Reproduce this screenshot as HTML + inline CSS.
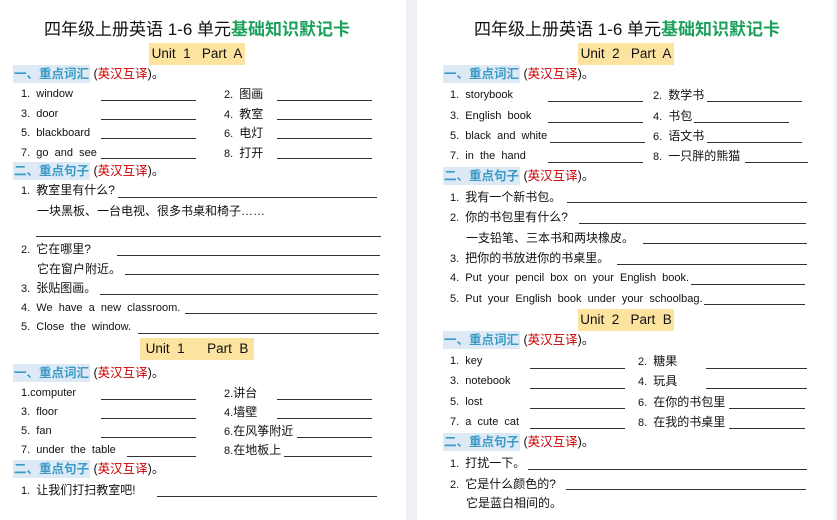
<!DOCTYPE html>
<html><head><meta charset="utf-8"><style>
body{margin:0;width:837px;height:504px;overflow:hidden;background:#eef0f4;position:relative;font-family:"Liberation Sans","Noto Sans CJK SC",sans-serif;color:#111}
.pg{position:absolute;top:0;height:520px;background:#fff}
.t{position:absolute;font-size:11px;line-height:14px;white-space:pre}
.t.c{font-size:12px}
.t i{font-style:normal;font-size:12px}
.l{position:absolute;height:1px;background:#333}
.ti{position:absolute;font-size:17px;font-weight:normal;line-height:20px;white-space:pre;transform:translateX(-50%)}
.ti b{color:#1aa05a}
.u{position:absolute;background:#fde3a0;font-size:13.5px;line-height:22px;height:22px;text-align:center;white-space:pre}
.s{position:absolute;font-size:12.5px;line-height:19px;white-space:pre}
.s span.h{background:#dde9f5;color:#3a9bc8;font-weight:bold;padding:2px 1px}
.s span.r{color:#c00}
</style></head><body>
<div class="pg" style="left:0;width:406px"></div>
<div class="pg" style="left:417px;width:417px"></div>

<!-- LEFT -->
<div class="ti" style="left:197px;top:20px">四年级上册英语 1-6 单元<b>基础知识默记卡</b></div>
<div class="u" style="left:149px;top:43px;width:96px">Unit  1   Part  A</div>
<div class="s" style="left:13px;top:65px"><span class="h">一、重点词汇</span> (<span class="r">英汉互译</span>)。</div>
<div class="t" style="left:21px;top:87px">1.  window</div><div class="l" style="left:101px;top:100px;width:95px"></div>
<div class="t" style="left:224px;top:87px">2.  <i>图画</i></div><div class="l" style="left:277px;top:100px;width:95px"></div>
<div class="t" style="left:21px;top:107px">3.  door</div><div class="l" style="left:101px;top:119px;width:95px"></div>
<div class="t" style="left:224px;top:107px">4.  <i>教室</i></div><div class="l" style="left:277px;top:119px;width:95px"></div>
<div class="t" style="left:21px;top:126px">5.  blackboard</div><div class="l" style="left:101px;top:138px;width:95px"></div>
<div class="t" style="left:224px;top:126px">6.  <i>电灯</i></div><div class="l" style="left:277px;top:138px;width:95px"></div>
<div class="t" style="left:21px;top:146px">7.  go  and  see</div><div class="l" style="left:101px;top:158px;width:95px"></div>
<div class="t" style="left:224px;top:146px">8.  <i>打开</i></div><div class="l" style="left:277px;top:158px;width:95px"></div>
<div class="s" style="left:13px;top:162px"><span class="h">二、重点句子</span> (<span class="r">英汉互译</span>)。</div>
<div class="t" style="left:21px;top:183px">1.  <i>教室里有什么?</i></div><div class="l" style="left:118px;top:197px;width:259px"></div>
<div class="t c" style="left:37px;top:204px">一块黑板、一台电视、很多书桌和椅子……</div>
<div class="l" style="left:36px;top:236px;width:345px"></div>
<div class="t" style="left:21px;top:242px">2.  <i>它在哪里?</i></div><div class="l" style="left:117px;top:255px;width:263px"></div>
<div class="t c" style="left:37px;top:262px">它在窗户附近。</div><div class="l" style="left:125px;top:274px;width:254px"></div>
<div class="t" style="left:21px;top:281px">3.  <i>张贴图画。</i></div><div class="l" style="left:100px;top:294px;width:278px"></div>
<div class="t" style="left:21px;top:301px">4.  We  have  a  new  classroom.</div><div class="l" style="left:185px;top:313px;width:192px"></div>
<div class="t" style="left:21px;top:320px">5.  Close  the  window.</div><div class="l" style="left:138px;top:333px;width:241px"></div>
<div class="u" style="left:140px;top:338px;width:114px">Unit  1      Part  B</div>
<div class="s" style="left:13px;top:364px"><span class="h">一、重点词汇</span> (<span class="r">英汉互译</span>)。</div>
<div class="t" style="left:21px;top:386px">1.computer</div><div class="l" style="left:101px;top:399px;width:95px"></div>
<div class="t" style="left:224px;top:386px">2.<i>讲台</i></div><div class="l" style="left:277px;top:399px;width:95px"></div>
<div class="t" style="left:21px;top:405px">3.  floor</div><div class="l" style="left:101px;top:418px;width:95px"></div>
<div class="t" style="left:224px;top:405px">4.<i>墙壁</i></div><div class="l" style="left:277px;top:418px;width:95px"></div>
<div class="t" style="left:21px;top:424px">5.  fan</div><div class="l" style="left:101px;top:437px;width:95px"></div>
<div class="t" style="left:224px;top:424px">6.<i>在风筝附近</i></div><div class="l" style="left:297px;top:437px;width:75px"></div>
<div class="t" style="left:21px;top:443px">7.  under  the  table</div><div class="l" style="left:127px;top:456px;width:69px"></div>
<div class="t" style="left:224px;top:443px">8.<i>在地板上</i></div><div class="l" style="left:284px;top:456px;width:88px"></div>
<div class="s" style="left:13px;top:460px"><span class="h">二、重点句子</span> (<span class="r">英汉互译</span>)。</div>
<div class="t" style="left:21px;top:483px">1.  <i>让我们打扫教室吧!</i></div><div class="l" style="left:157px;top:496px;width:220px"></div>

<!-- RIGHT -->
<div class="ti" style="left:627px;top:20px">四年级上册英语 1-6 单元<b>基础知识默记卡</b></div>
<div class="u" style="left:578px;top:43px;width:96px">Unit  2   Part  A</div>
<div class="s" style="left:443px;top:65px"><span class="h">一、重点词汇</span> (<span class="r">英汉互译</span>)。</div>
<div class="t" style="left:450px;top:88px">1.  storybook</div><div class="l" style="left:548px;top:101px;width:95px"></div>
<div class="t" style="left:653px;top:88px">2.  <i>数学书</i></div><div class="l" style="left:707px;top:101px;width:95px"></div>
<div class="t" style="left:450px;top:109px">3.  English  book</div><div class="l" style="left:548px;top:122px;width:95px"></div>
<div class="t" style="left:653px;top:109px">4.  <i>书包</i></div><div class="l" style="left:694px;top:122px;width:95px"></div>
<div class="t" style="left:450px;top:129px">5.  black  and  white</div><div class="l" style="left:550px;top:142px;width:95px"></div>
<div class="t" style="left:653px;top:129px">6.  <i>语文书</i></div><div class="l" style="left:707px;top:142px;width:95px"></div>
<div class="t" style="left:450px;top:149px">7.  in  the  hand</div><div class="l" style="left:548px;top:162px;width:95px"></div>
<div class="t" style="left:653px;top:149px">8.  <i>一只胖的熊猫</i></div><div class="l" style="left:745px;top:162px;width:63px"></div>
<div class="s" style="left:443px;top:167px"><span class="h">二、重点句子</span> (<span class="r">英汉互译</span>)。</div>
<div class="t" style="left:450px;top:190px">1.  <i>我有一个新书包。</i></div><div class="l" style="left:567px;top:202px;width:240px"></div>
<div class="t" style="left:450px;top:210px">2.  <i>你的书包里有什么?</i></div><div class="l" style="left:579px;top:223px;width:227px"></div>
<div class="t c" style="left:466px;top:231px">一支铅笔、三本书和两块橡皮。</div><div class="l" style="left:643px;top:243px;width:164px"></div>
<div class="t" style="left:450px;top:251px">3.  <i>把你的书放进你的书桌里。</i></div><div class="l" style="left:617px;top:264px;width:190px"></div>
<div class="t" style="left:450px;top:271px">4.  Put  your  pencil  box  on  your  English  book.</div><div class="l" style="left:691px;top:284px;width:114px"></div>
<div class="t" style="left:450px;top:292px">5.  Put  your  English  book  under  your  schoolbag.</div><div class="l" style="left:704px;top:304px;width:101px"></div>
<div class="u" style="left:578px;top:309px;width:96px">Unit  2   Part  B</div>
<div class="s" style="left:443px;top:331px"><span class="h">一、重点词汇</span> (<span class="r">英汉互译</span>)。</div>
<div class="t" style="left:450px;top:354px">1.  key</div><div class="l" style="left:530px;top:368px;width:95px"></div>
<div class="t" style="left:638px;top:354px">2.  <i>糖果</i></div><div class="l" style="left:706px;top:368px;width:101px"></div>
<div class="t" style="left:450px;top:374px">3.  notebook</div><div class="l" style="left:530px;top:388px;width:95px"></div>
<div class="t" style="left:638px;top:374px">4.  <i>玩具</i></div><div class="l" style="left:706px;top:388px;width:101px"></div>
<div class="t" style="left:450px;top:395px">5.  lost</div><div class="l" style="left:530px;top:408px;width:95px"></div>
<div class="t" style="left:638px;top:395px">6.  <i>在你的书包里</i></div><div class="l" style="left:729px;top:408px;width:76px"></div>
<div class="t" style="left:450px;top:415px">7.  a  cute  cat</div><div class="l" style="left:530px;top:428px;width:95px"></div>
<div class="t" style="left:638px;top:415px">8.  <i>在我的书桌里</i></div><div class="l" style="left:729px;top:428px;width:76px"></div>
<div class="s" style="left:443px;top:433px"><span class="h">二、重点句子</span> (<span class="r">英汉互译</span>)。</div>
<div class="t" style="left:450px;top:456px">1.  <i>打扰一下。</i></div><div class="l" style="left:528px;top:469px;width:279px"></div>
<div class="t" style="left:450px;top:477px">2.  <i>它是什么颜色的?</i></div><div class="l" style="left:566px;top:489px;width:240px"></div>
<div class="t c" style="left:466px;top:496px">它是蓝白相间的。</div>
</body></html>
